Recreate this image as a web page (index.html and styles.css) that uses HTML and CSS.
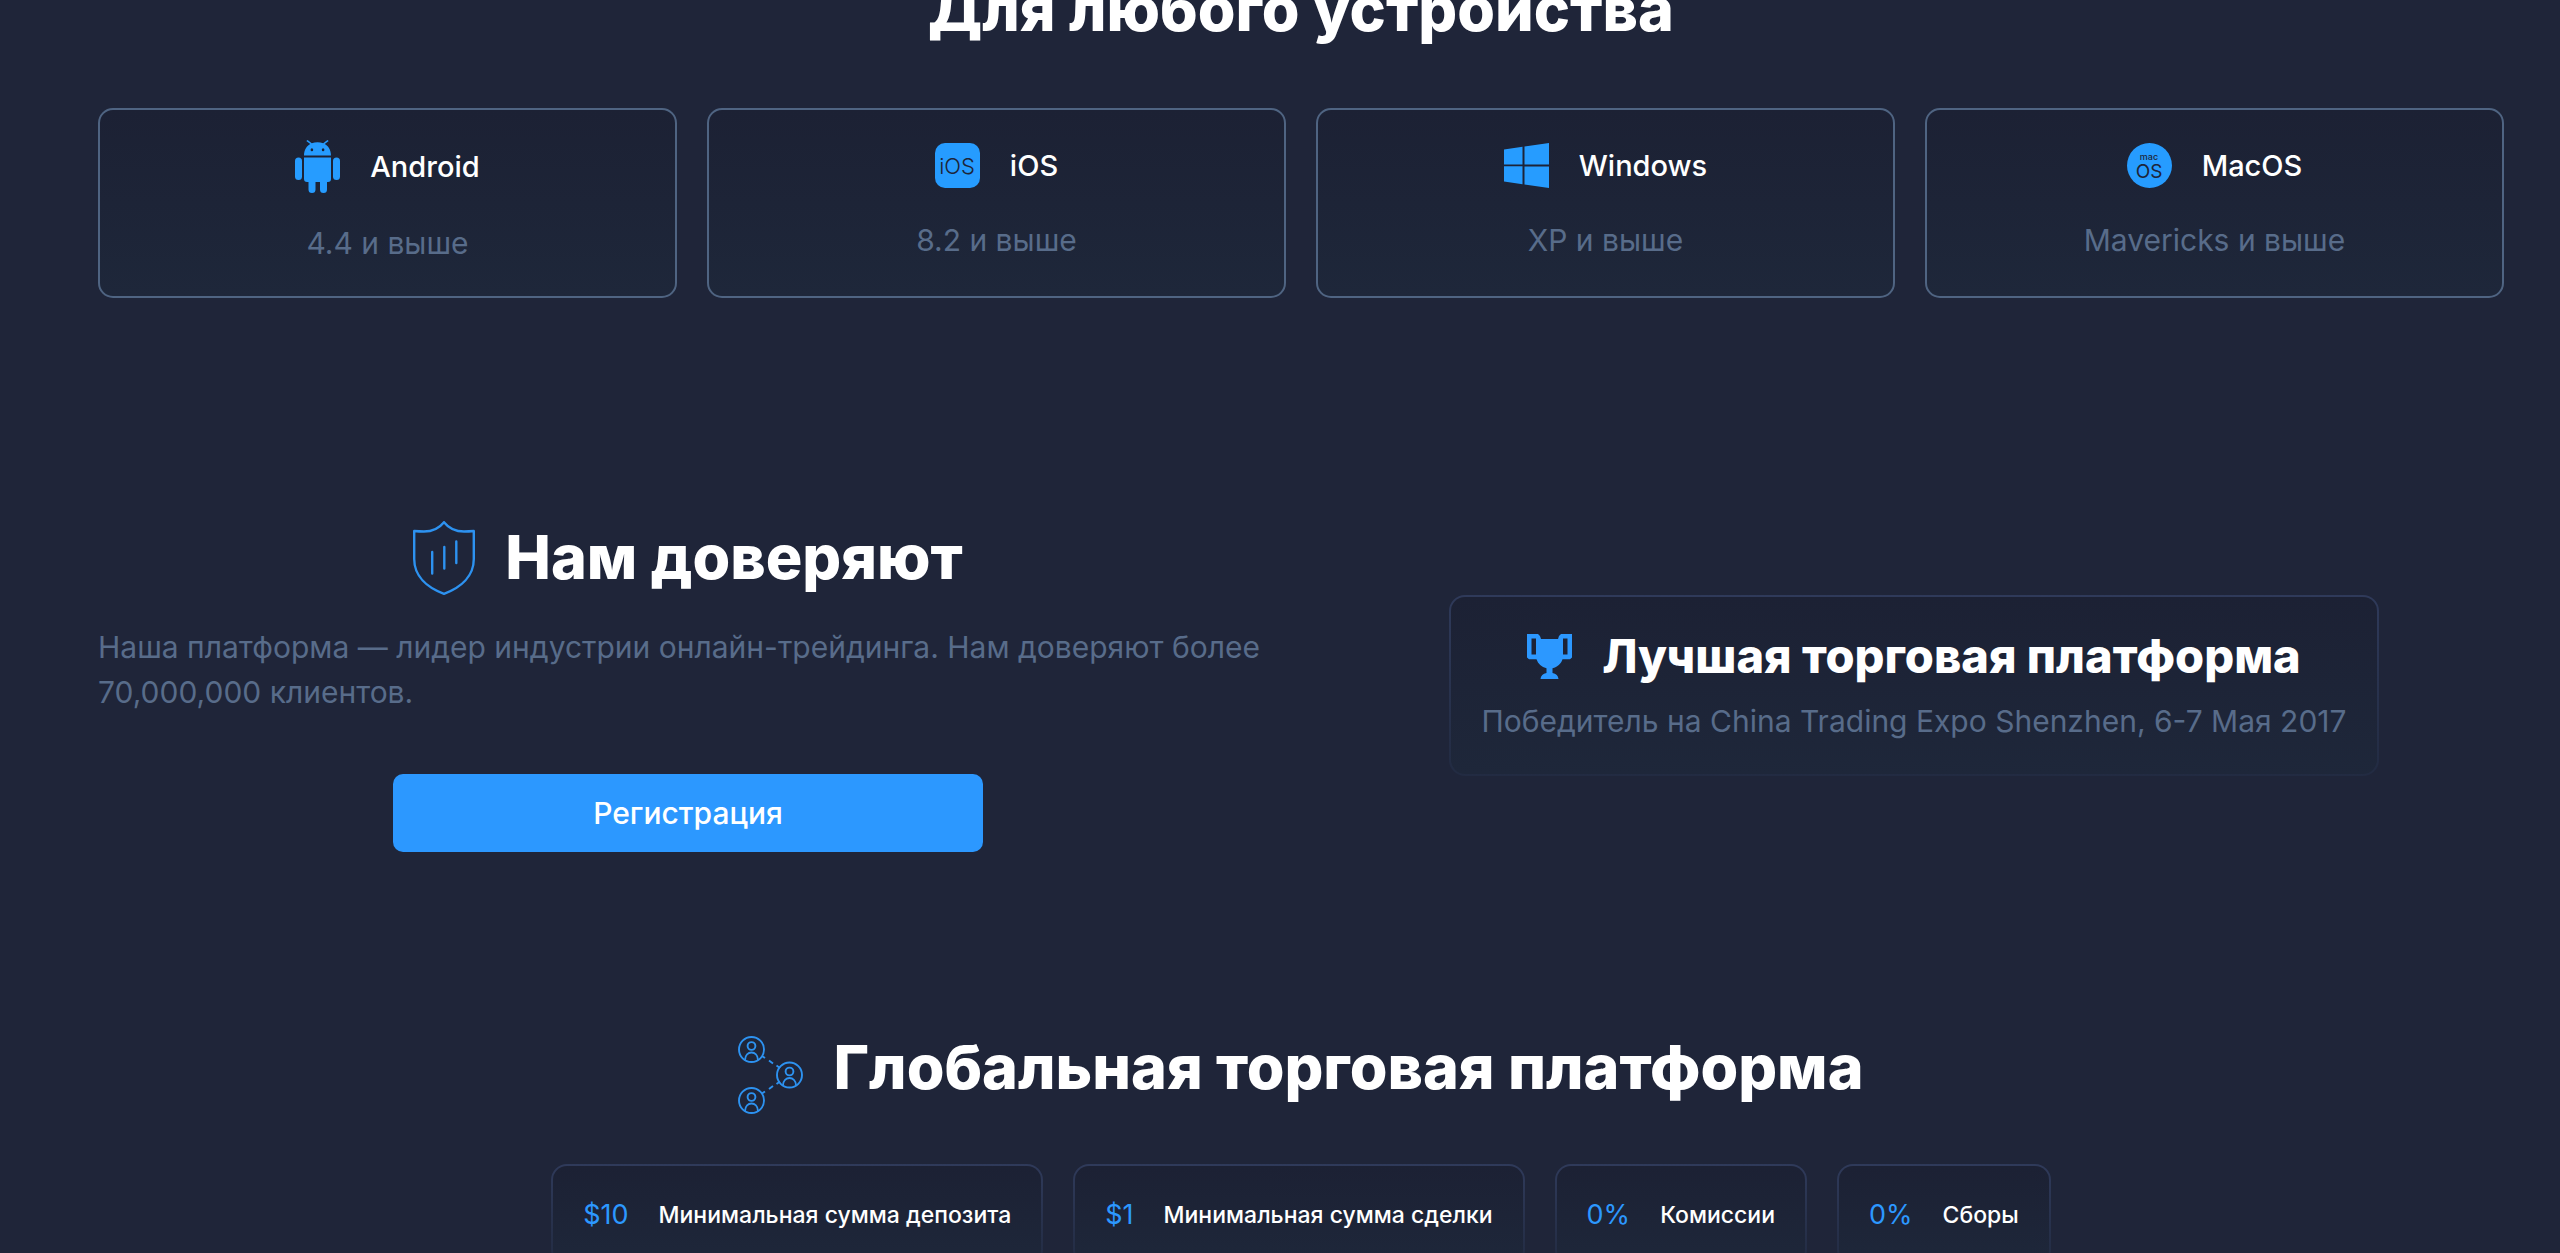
FILE: index.html
```html
<!DOCTYPE html>
<html lang="ru">
<head>
  <meta charset="utf-8">
  <title>Торговая платформа</title>
  <link rel="stylesheet" href="styles.css">
</head>
<body>
  <main class="page">
    <section class="devices">
      <h2 class="title">Для любого устройства</h2>
      <div class="device-list">
        <div class="device">
          <div class="device-name">
            <svg class="icon-android" viewBox="0 0 45 53" fill="currentColor">
              <path d="M9 15.500C9 9.500 12 5.500 15.300 3.900L11.300 .9 12.600 0 16.800 3.300C20.300 2 24.700 2 28.200 3.300L32.400 0 33.700 .9 29.700 3.900C33 5.500 36 9.500 36 15.500ZM16.900 8.300A1.300 1.500 0 1 0 16.900 11.300 1.300 1.500 0 1 0 16.900 8.300ZM28.100 8.300A1.300 1.500 0 1 0 28.100 11.300 1.300 1.500 0 1 0 28.100 8.300Z" fill-rule="evenodd"/>
              <path d="M9 17.500H36V39Q36 42 33 42H32V49.500A3.500 3.500 0 0 1 25 49.500V42H20.500V49.500A3.500 3.500 0 0 1 13.500 49.500V42H12Q9 42 9 39Z"/>
              <rect x="0" y="17.500" width="7" height="22.500" rx="3.500"/>
              <rect x="38" y="17.500" width="7" height="22.500" rx="3.500"/>
            </svg>
            <span>Android</span>
          </div>
          <p class="text">4.4 и выше</p>
        </div>
        <div class="device">
          <div class="device-name">
            <svg class="icon" viewBox="0 0 45 45">
              <rect width="45" height="45" rx="10" fill="currentColor"/>
              <text class="icon-text" x="22" y="31" font-size="22" font-weight="300">iOS</text>
            </svg>
            <span>iOS</span>
          </div>
          <p class="text">8.2 и выше</p>
        </div>
        <div class="device">
          <div class="device-name">
            <svg class="icon" viewBox="0 0 45 45" fill="currentColor">
              <path d="M0 6.400 18.500 3.800V21.400H0ZM20.500 3.500 45 0V21.400H20.500ZM0 23.200H18.500V41.200L0 38.600ZM20.500 23.600H45V45L20.500 41.500Z"/>
            </svg>
            <span>Windows</span>
          </div>
          <p class="text">XP и выше</p>
        </div>
        <div class="device">
          <div class="device-name">
            <svg class="icon" viewBox="0 0 45 45">
              <circle cx="22.500" cy="22.500" r="22.500" fill="currentColor"/>
              <text class="icon-text" x="22" y="17" font-size="9" font-weight="500">mac</text>
              <text class="icon-text" x="22" y="34.500" font-size="19" font-weight="400">OS</text>
            </svg>
            <span>MacOS</span>
          </div>
          <p class="text">Mavericks и выше</p>
        </div>
      </div>
    </section>

    <section class="trust">
      <div class="trust-info">
        <h2 class="title">
          <svg class="icon-shield" viewBox="0 0 62 74" fill="none" stroke="currentColor" stroke-width="2.400" stroke-linecap="round" stroke-linejoin="round">
            <path d="M31 1.200C36 7.500 42 10.500 51 10.500Q56 10.500 60.800 10V38C60.800 55 48 66.500 31 72.800 14 66.500 1.200 55 1.200 38V10Q6 10.500 11 10.500C20 10.500 26 7.500 31 1.200Z"/>
            <path d="M19.200 31V52.500M31.300 26V47.500M43.300 20.500V42"/>
          </svg>
          <span>Нам доверяют</span>
        </h2>
        <p class="text">Наша платформа — лидер индустрии онлайн-трейдинга. Нам доверяют более 70,000,000 клиентов.</p>
        <button class="register" type="button">Регистрация</button>
      </div>
      <div class="award box">
        <h3 class="award-title">
          <svg class="icon" viewBox="0 0 45 45" fill="currentColor" fill-rule="evenodd">
            <path d="M0 0H11Q14 2 14 5H31Q31 2 34 0H45V23.500L43 25.300H35.500C34 30 30.500 33 25.500 34.300V39Q31 40 31.500 45H13.500Q14 40 19.500 39V34.300C14.500 33 11 30 9.500 25.300H2L0 23.500ZM4.500 4.500V20.500H9V4.500ZM36 4.500V20.500H40.500V4.500Z"/>
          </svg>
          <span>Лучшая торговая платформа</span>
        </h3>
        <p class="text">Победитель на China Trading Expo Shenzhen, 6-7 Мая 2017</p>
      </div>
    </section>

    <section class="platform">
      <h2 class="title">
        <svg class="icon-people" viewBox="0 0 65 78" fill="none" stroke="currentColor" stroke-width="1.900">
          <defs>
            <g id="person">
              <circle cx="13.500" cy="13.500" r="12.500"/>
              <circle cx="13.500" cy="10" r="3.900"/>
              <path d="M7 24C7.300 14 19.700 14 20 24"/>
            </g>
          </defs>
          <use href="#person"/>
          <use href="#person" x="38" y="25.500"/>
          <use href="#person" y="51"/>
          <path d="M24 20 27 22M31 24.500 35 27.500M38.500 29.500 42 32M24 57.500 27 55.500M31 53 35 50M38.500 48 42 45.500"/>
        </svg>
        <span>Глобальная торговая платформа</span>
      </h2>
      <ul class="facts">
        <li class="fact box"><b class="value">$10</b> Минимальная сумма депозита</li>
        <li class="fact box"><b class="value">$1</b> Минимальная сумма сделки</li>
        <li class="fact box"><b class="value">0%</b> Комиссии</li>
        <li class="fact box"><b class="value">0%</b> Сборы</li>
      </ul>
    </section>
  </main>
</body>
</html>
```

FILE: styles.css
```css
* {
  box-sizing: border-box;
}
body {
  margin: 0;
  min-height: 100vh;
  overflow: hidden;
  background-color: #1f2539;
  color: #fff;
  font-family: Inter, sans-serif;
}
h2, h3, p, ul {
  margin: 0;
  padding: 0;
}
.page {
  margin-top: -29px;
  padding: 0 56px 0 98px;
}
.title {
  display: flex;
  justify-content: center;
  align-items: center;
  gap: 30px;
  font-size: 61px;
  line-height: 77px;
  font-weight: 800;
}
.text {
  color: #586c8a;
  font-size: 30px;
  line-height: 45px;
}
svg {
  flex: none;
  color: #269cff;
}
.icon {
  width: 45px;
  height: 45px;
}
.icon-text {
  fill: #1d2438;
  text-anchor: middle;
}

/* devices */
.device-list {
  display: grid;
  grid-template-columns: repeat(4, 1fr);
  gap: 30px;
  margin-top: 60px;
}
.device {
  padding: 30px;
  border: 2px solid #4f6482;
  border-radius: 15px;
  background: linear-gradient(#1c2134, #1e273a);
  text-align: center;
}
.device-name {
  display: flex;
  justify-content: center;
  align-items: center;
  gap: 30px;
  min-height: 50px;
  margin-bottom: 28px;
  font-size: 29px;
  font-weight: 500;
}
.icon-android {
  width: 45px;
  height: 53px;
}

/* trust */
.trust {
  display: grid;
  grid-template-columns: 1fr 1fr;
  align-items: center;
  gap: 46px;
  margin-top: 221px;
}
.trust-info .text {
  margin: 29px 0 59px;
}
.icon-shield {
  width: 62px;
  height: 74px;
  color: #2d92f0;
}
.register {
  display: block;
  width: 50%;
  height: 78px;
  margin: 0 auto;
  border: 0;
  border-radius: 10px;
  background-color: #2c98ff;
  color: #fff;
  font-family: inherit;
  font-size: 30px;
  font-weight: 500;
}
.box {
  border: 2px solid transparent;
  border-radius: 16px;
  background:
    linear-gradient(#1c2134, #1e273a) padding-box,
    linear-gradient(#2f3a5a, #222b42) border-box;
}
.award {
  justify-self: center;
  padding: 30px;
}
.award-title {
  display: flex;
  justify-content: center;
  align-items: center;
  gap: 30px;
  margin-bottom: 14px;
  font-size: 47px;
  line-height: 58px;
  font-weight: 800;
}
.award .icon {
  color: #2c98ff;
}

/* platform */
.platform {
  margin-top: 168px;
}
.icon-people {
  width: 65px;
  height: 78px;
  margin-top: 16px;
  color: #2d92f0;
}
.facts {
  display: flex;
  justify-content: center;
  gap: 30px;
  margin-top: 50px;
  list-style: none;
}
.fact {
  display: flex;
  align-items: center;
  gap: 30px;
  padding: 30px;
  font-size: 23px;
  line-height: 38px;
  font-weight: 500;
}
.value {
  color: #2c98ff;
  font-size: 27px;
  font-weight: 400;
}
```
